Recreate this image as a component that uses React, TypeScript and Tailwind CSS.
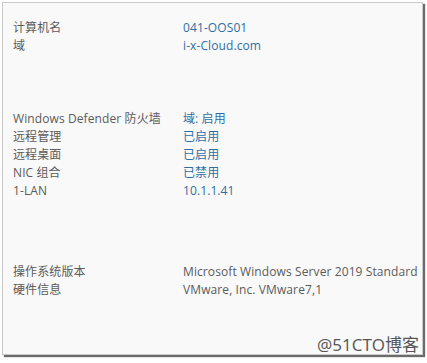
import React from 'react';

const groups: { label: string; value: string; link?: boolean }[][] = [
  [
    { label: '计算机名', value: '041-OOS01', link: true },
    { label: '域', value: 'i-x-Cloud.com', link: true },
  ],
  [
    { label: 'Windows Defender 防火墙', value: '域: 启用', link: true },
    { label: '远程管理', value: '已启用', link: true },
    { label: '远程桌面', value: '已启用', link: true },
    { label: 'NIC 组合', value: '已禁用', link: true },
    { label: '1-LAN', value: '10.1.1.41', link: true },
  ],
  [
    { label: '操作系统版本', value: 'Microsoft Windows Server 2019 Standard' },
    { label: '硬件信息', value: 'VMware, Inc. VMware7,1' },
  ],
];

export default function App() {
  return (
    <div className="w-[427px] h-[363px] bg-white pl-[2px] pt-[2px] overflow-hidden">
      <div
        className="relative w-[421px] h-[353px] border border-[#c9c9c9] bg-[#f9f9f9] shadow-[2px_2px_1px_#6b6b6b] pl-[10px] pt-[16px] text-[12px] leading-[18px] tracking-[0.1px]"
        style={{ fontFamily: '"Open Sans", "Noto Sans CJK SC", sans-serif' }}
      >
        <div className="flex flex-col gap-[55px]">
          {groups.map((g, i) => (
            <div key={i} className={i === 2 ? 'mt-[8px]' : ''}>
              {g.map(r => (
                <div key={r.label} className="flex">
                  <div className="w-[170px] text-[#5b5b5b] whitespace-nowrap">{r.label}</div>
                  <div className={r.link ? 'text-[#2f6ea5] whitespace-nowrap' : 'text-[#5b5b5b] whitespace-nowrap'}>{r.value}</div>
                </div>
              ))}
            </div>
          ))}
        </div>
        <div className="absolute right-[3px] bottom-[1px] text-[17px] leading-[17px] text-[#555] tracking-normal">@51CTO博客</div>
      </div>
    </div>
  );
}
